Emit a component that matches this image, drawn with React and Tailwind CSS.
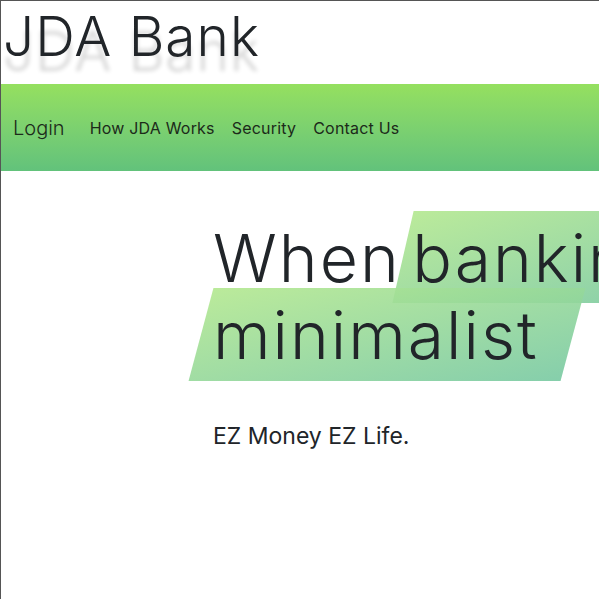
import React from "react";

const navLinks = ["How JDA Works", "Security", "Contact Us"];

const App = () => {
  return (
    <div
      className="min-h-screen w-[620px] bg-white text-[#212529] border-t border-l border-[#555] overflow-hidden"
      style={{ fontFamily: "Inter, 'Noto Sans', sans-serif" }}
    >
      <header className="h-[83px] pl-[2px]">
        <h1 className="text-[55px] font-light leading-[1] pt-[8px] tracking-[1px] [text-shadow:0_15px_4px_rgba(0,0,0,0.16)]">
          JDA Bank
        </h1>
      </header>

      <nav className="h-[87px] flex items-center gap-[25px] pl-[12px] bg-gradient-to-b from-[#95e05f] to-[#62c27b] text-[#1c2a1a]">
        <a className="text-[20px] font-light">Login</a>
        <div className="flex items-center gap-[17px] text-[16px] font-normal tracking-[0.2px]">
          {navLinks.map((l) => (
            <a key={l}>{l}</a>
          ))}
        </div>
      </nav>

      <section className="pl-[212px] pt-[49px]">
        <h2 className="relative text-[66px] font-light leading-[77px] whitespace-nowrap tracking-[2px] [word-spacing:-9px]">
          <span
            className="absolute left-[190px] top-[-9px] w-[260px] h-[92px] -skew-x-[13deg] bg-gradient-to-br from-[#b3e88f]/90 to-[#7ccaa0]/90"
            aria-hidden="true"
          />
          <span
            className="absolute left-[-12px] top-[68px] w-[372px] h-[93px] -skew-x-[15deg] bg-gradient-to-br from-[#b3e88f]/90 to-[#78c9a2]/90"
            aria-hidden="true"
          />
          <span className="relative block">When banking is</span>
          <span className="relative block">minimalist</span>
        </h2>
        <p className="mt-[45px] text-[23px] font-normal">EZ Money EZ Life.</p>
      </section>
    </div>
  );
};

export default App;
